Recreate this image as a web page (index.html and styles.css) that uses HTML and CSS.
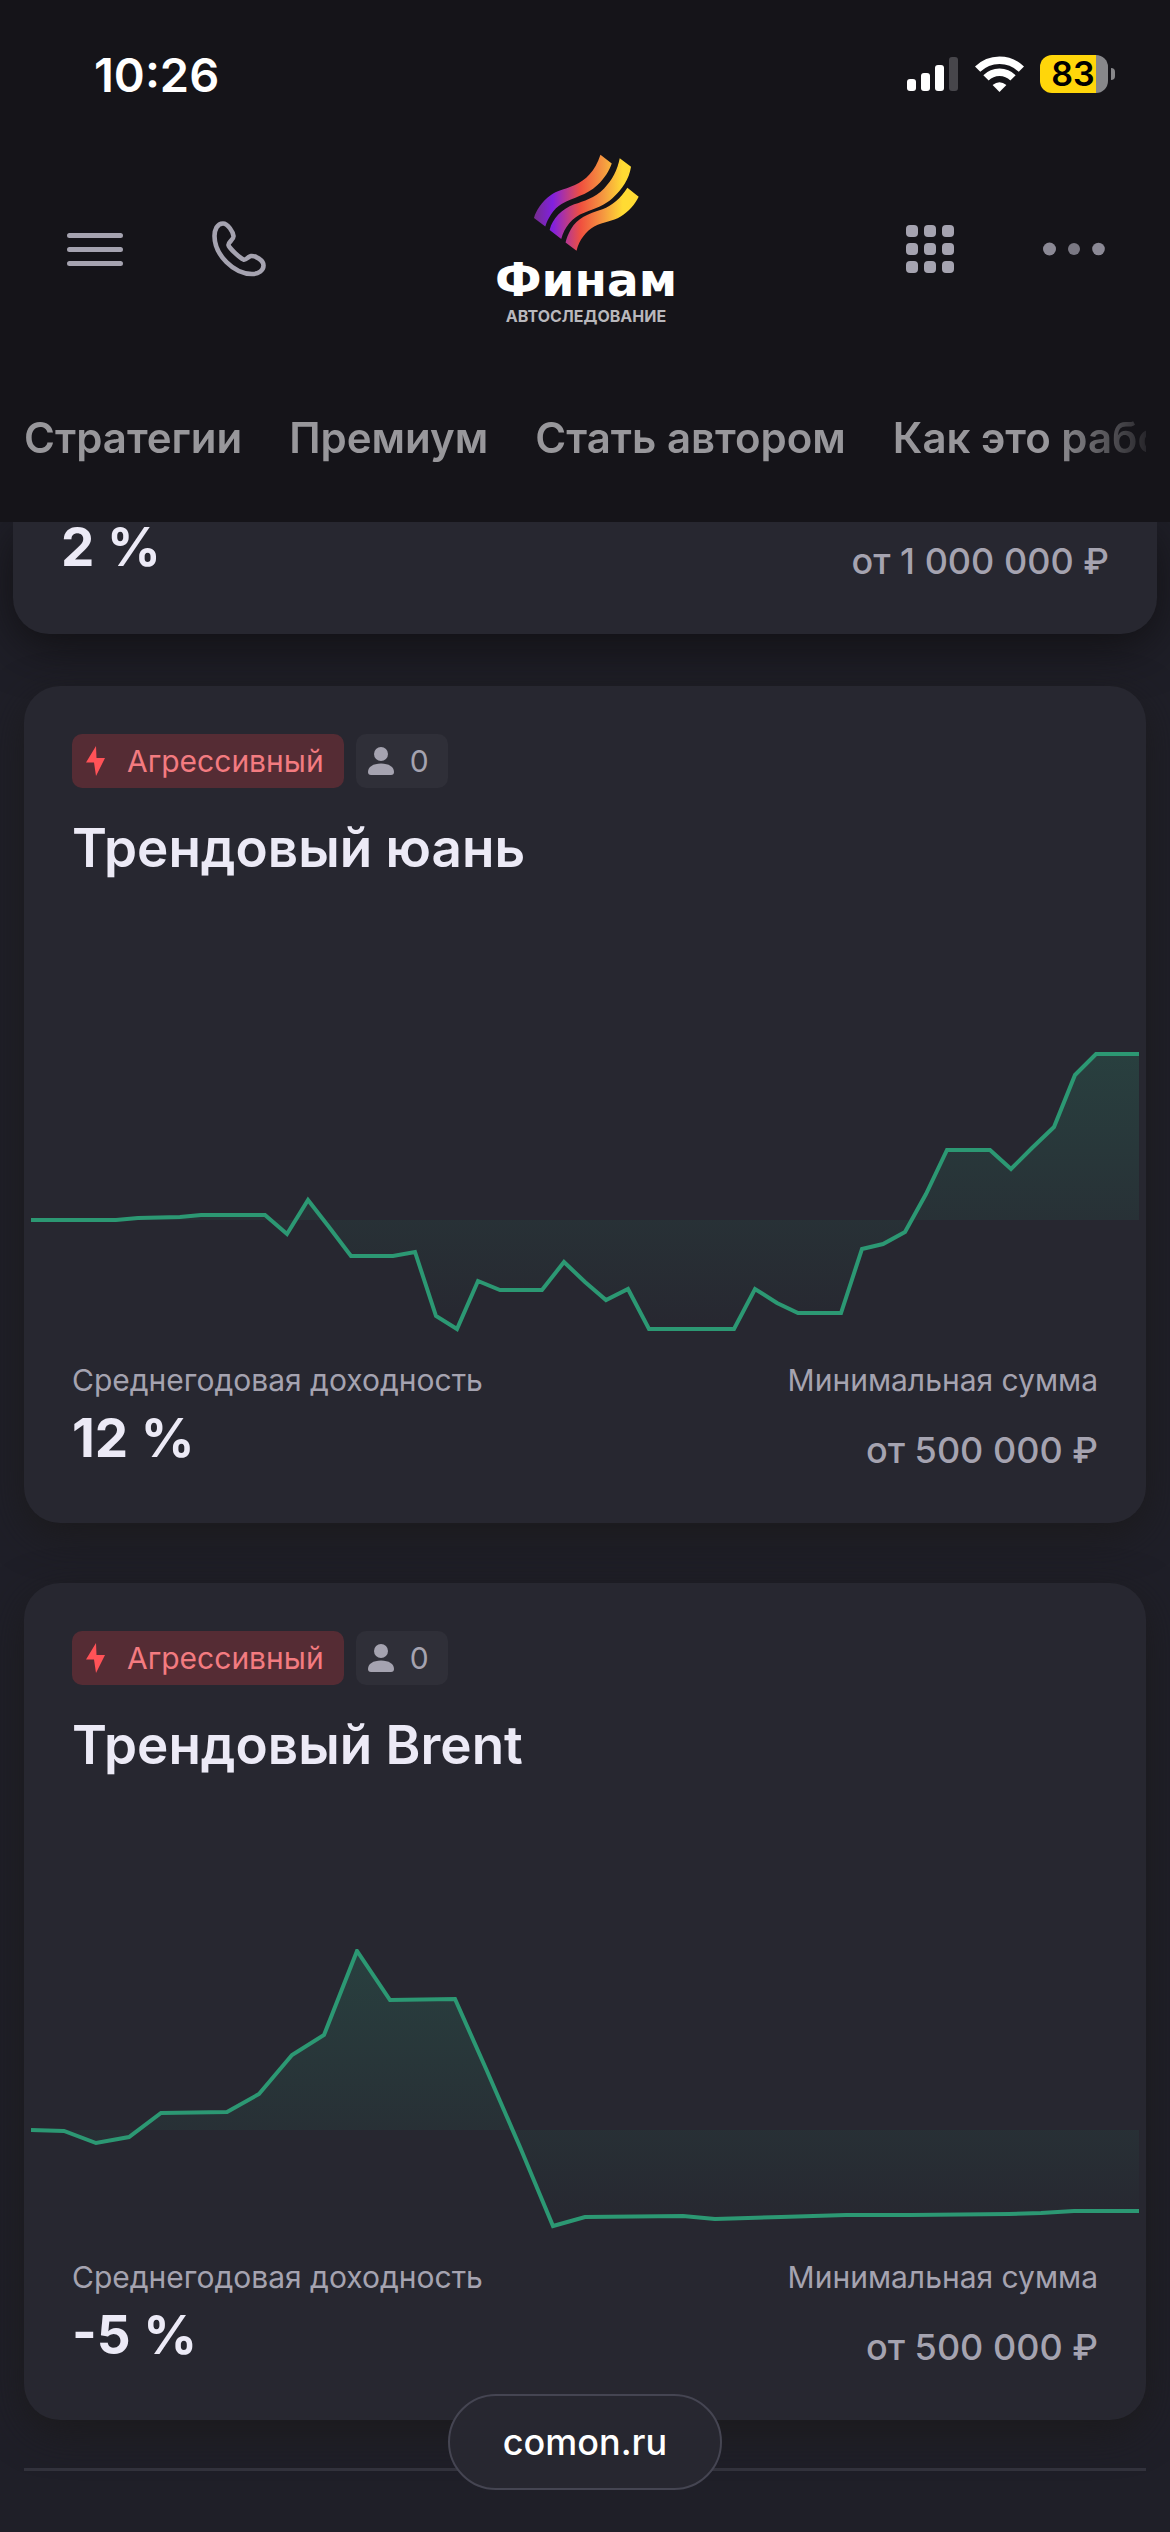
FILE: index.html
```html
<!DOCTYPE html>
<html lang="ru">
  <head>
    <meta charset="UTF-8" />
    <meta name="viewport" content="width=device-width, initial-scale=1.0" />
    <title>Финам Автоследование</title>
    <link rel="stylesheet" href="styles.css">
  </head>
  <body>
    <header class="header">
      <div class="status-bar">
        <span class="time">10:26</span>
        <div class="status-icons">
          <svg width="52" height="36" viewBox="0 0 52 36" fill="#fff">
            <rect x="0" y="23" width="9" height="12" rx="3" />
            <rect x="14" y="17" width="9" height="18" rx="3" />
            <rect x="28" y="9" width="9" height="26" rx="3" />
            <rect x="42" y="1" width="9" height="34" rx="3" fill="#47464b" />
          </svg>
          <svg width="49" height="36" viewBox="0 0 49 36" fill="none" stroke="#fff" stroke-width="7.5">
            <path d="M2.6 13.2 A31 31 0 0 1 46.4 13.2" />
            <path d="M11 21.8 A19 19 0 0 1 38 21.8" />
            <path d="M24.500 36 L17.600 29 Q24.500 23.500 31.400 29 Z" fill="#fff" stroke="none" />
          </svg>
          <div class="battery"><span class="battery-level">83</span></div>
        </div>
      </div>

      <div class="top-row">
        <div class="top-group">
          <button class="icon-btn" aria-label="Меню">
            <svg width="56" height="35" viewBox="0 0 56 35" stroke="#a5a3b0" stroke-width="5" stroke-linecap="round">
              <path d="M2.500 3.500H53.500M2.500 17.500H53.500M2.500 31.500H53.500" />
            </svg>
          </button>
          <button class="icon-btn" aria-label="Позвонить">
            <svg width="54" height="56" viewBox="0 0 54 56" fill="none" stroke="#a5a3b0" stroke-width="4.600" stroke-linejoin="round">
              <path d="M11 2.500C5 2.500 2.500 9 2.500 15C2.500 34 22 53 40 53C47 53 51.500 49 51.500 44.500C51.500 39 43 34.500 39 35C36 35.500 34 39.500 31.500 38.500C28 37 17 27 16.500 24C16 21 22 18.500 21.500 15C21 11 16 2.500 11 2.500Z" />
            </svg>
          </button>
        </div>

        <a class="logo" href="/">
          <svg width="107" height="98" viewBox="186 42 322 294">
            <defs>
              <linearGradient id="flame" gradientUnits="userSpaceOnUse" x1="189" y1="0" x2="470" y2="0">
                <stop offset="0" stop-color="#752d8c" />
                <stop offset="0.200" stop-color="#8120e0" />
                <stop offset="0.500" stop-color="#f0503f" />
                <stop offset="0.750" stop-color="#f59b40" />
                <stop offset="0.950" stop-color="#ffdb33" />
              </linearGradient>
            </defs>
            <g fill="url(#flame)">
              <path d="M389 44C372 95 345 120 312 135C275 151 258 152 240 165C212 185 195 212 189 234L223 260C230 236 248 206 272 192C310 170 345 168 380 135C402 113 415 93 423 70Z" />
              <path d="M447 54C440 90 425 118 400 145C370 175 340 182 310 193C272 208 245 235 236 270L271 297C280 262 305 230 340 218C375 206 402 196 425 175C455 147 475 118 481 80Z" />
              <path d="M470 143C450 175 425 196 395 208C350 222 320 235 300 268C292 282 287 295 284 308L317 333C325 300 345 275 370 260C400 245 425 245 450 230C475 213 493 193 504 170Z" />
            </g>
          </svg>
          <span class="logo-name">Финам</span>
          <span class="logo-sub">АВТОСЛЕДОВАНИЕ</span>
        </a>

        <div class="top-group top-group-right">
          <button class="icon-btn" aria-label="Сервисы">
            <svg width="48" height="48" viewBox="0 0 48 48" fill="#a5a3b0">
              <rect x="0" y="0" width="12" height="12" rx="4" />
              <rect x="18" y="0" width="12" height="12" rx="4" />
              <rect x="36" y="0" width="12" height="12" rx="4" />
              <rect x="0" y="18" width="12" height="12" rx="4" />
              <rect x="18" y="18" width="12" height="12" rx="4" />
              <rect x="36" y="18" width="12" height="12" rx="4" />
              <rect x="0" y="36" width="12" height="12" rx="4" />
              <rect x="18" y="36" width="12" height="12" rx="4" />
              <rect x="36" y="36" width="12" height="12" rx="4" />
            </svg>
          </button>
          <button class="icon-btn" aria-label="Ещё">
            <svg width="62" height="14" viewBox="0 0 62 14" fill="#8b8995">
              <circle cx="6.500" cy="7" r="6.500" />
              <circle cx="31" cy="7" r="6" fill="#7a7883" />
              <circle cx="55.500" cy="7" r="6.300" />
            </svg>
          </button>
        </div>
      </div>

      <nav class="tabs">
        <a href="/strategies">Стратегии</a>
        <a href="/premium">Премиум</a>
        <a href="/author">Стать автором</a>
        <a href="/how-it-works">Как это работает</a>
      </nav>
    </header>

    <main class="strategies">
      <article class="card card-active">
        <div class="metrics">
          <div class="metric"><strong class="income">2 %</strong></div>
          <div class="metric metric-right"><span class="min-sum">от 1 000 000 ₽</span></div>
        </div>
      </article>

      <article class="card">
        <div class="tags">
          <span class="tag tag-risk">
            <svg width="19" height="30" viewBox="0 0 19 30" fill="#ff5257"><path d="M10 0L0 16.500H8L10 30L19 12H10.500Z" /></svg>
            Агрессивный
          </span>
          <span class="tag tag-users">
            <svg width="26" height="28" viewBox="0 0 26 28" fill="#a5a3b0"><circle cx="13" cy="7" r="7" /><path d="M0 25C0 20 5 16.500 13 16.500S26 20 26 25Q26 28 23 28H3Q0 28 0 25Z" /></svg>
            0
          </span>
        </div>
        <h2 class="title">Трендовый юань</h2>
        <svg class="chart" viewBox="0 0 1108 280" preserveAspectRatio="none">
          <defs>
            <linearGradient id="area" gradientUnits="userSpaceOnUse" x1="0" y1="0" x2="0" y2="280">
              <stop offset="0" stop-color="#2fa37c" stop-opacity="0.200" />
              <stop offset="1" stop-color="#2fa37c" stop-opacity="0" />
            </linearGradient>
          </defs>
          <path class="area" d="M0 168L85 168L107 166L149 165L170 163L234 163L256 182L277 148L298 175L320 204L362 204L384 200L405 264L426 277L447 229L469 238L511 238L533 210L554 230L575 248L597 237L618 277L703 277L724 237L746 251L767 261L810 261L831 197L852 192L874 180L895 142L916 98L959 98L980 117L1001 96L1023 75L1044 23L1065 2L1108 2V168Z" />
          <path class="line" d="M0 168L85 168L107 166L149 165L170 163L234 163L256 182L277 148L298 175L320 204L362 204L384 200L405 264L426 277L447 229L469 238L511 238L533 210L554 230L575 248L597 237L618 277L703 277L724 237L746 251L767 261L810 261L831 197L852 192L874 180L895 142L916 98L959 98L980 117L1001 96L1023 75L1044 23L1065 2L1108 2" />
        </svg>
        <div class="metrics">
          <div class="metric">
            <span class="label">Среднегодовая доходность</span>
            <strong class="income">12 %</strong>
          </div>
          <div class="metric metric-right">
            <span class="label">Минимальная сумма</span>
            <span class="min-sum">от 500 000 ₽</span>
          </div>
        </div>
      </article>

      <article class="card">
        <div class="tags">
          <span class="tag tag-risk">
            <svg width="19" height="30" viewBox="0 0 19 30" fill="#ff5257"><path d="M10 0L0 16.500H8L10 30L19 12H10.500Z" /></svg>
            Агрессивный
          </span>
          <span class="tag tag-users">
            <svg width="26" height="28" viewBox="0 0 26 28" fill="#a5a3b0"><circle cx="13" cy="7" r="7" /><path d="M0 25C0 20 5 16.500 13 16.500S26 20 26 25Q26 28 23 28H3Q0 28 0 25Z" /></svg>
            0
          </span>
        </div>
        <h2 class="title">Трендовый Brent</h2>
        <svg class="chart" viewBox="0 0 1108 280" preserveAspectRatio="none">
          <path class="area" d="M0 181L33 182L65 194L98 188L130 164L196 163L228 145L261 106L293 86L326 2L359 51L424 50L456 122L489 198L522 277L554 268L652 267L684 270L717 269L750 268L815 266L880 266L978 265L1010 264L1043 262L1108 262V181Z" />
          <path class="line" d="M0 181L33 182L65 194L98 188L130 164L196 163L228 145L261 106L293 86L326 2L359 51L424 50L456 122L489 198L522 277L554 268L652 267L684 270L717 269L750 268L815 266L880 266L978 265L1010 264L1043 262L1108 262" />
        </svg>
        <div class="metrics">
          <div class="metric">
            <span class="label">Среднегодовая доходность</span>
            <strong class="income">-5 %</strong>
          </div>
          <div class="metric metric-right">
            <span class="label">Минимальная сумма</span>
            <span class="min-sum">от 500 000 ₽</span>
          </div>
        </div>
      </article>
      <hr class="divider" />
    </main>

    <button class="address">comon.ru</button>
  </body>
</html>
```
FILE: styles.css
```css
* {
  box-sizing: border-box;
}

body {
  margin: 0;
  min-height: 100vh;
  background-color: #1f1f28;
  color: #eceaf6;
  font-family: Inter, 'Liberation Sans', sans-serif;
  overflow-x: hidden;
}

button {
  border: none;
  padding: 0;
  background: none;
  font-family: inherit;
}

a {
  color: inherit;
  text-decoration: none;
}

svg {
  display: block;
}

/* header */
.header {
  position: relative;
  z-index: 1;
  background-color: #151419;
}

.status-bar {
  display: flex;
  justify-content: space-between;
  align-items: center;
  height: 140px;
  padding: 8px 55px 0 94px;
}

.time {
  color: #fff;
  font-size: 47px;
  font-weight: 600;
}

.status-icons {
  display: flex;
  align-items: center;
  gap: 16px;
}

.battery {
  display: flex;
  align-items: center;
  gap: 3px;
}

.battery::after {
  content: '';
  width: 4px;
  height: 12px;
  border-radius: 0 4px 4px 0;
  background-color: #87878a;
}

.battery-level {
  width: 68px;
  height: 38px;
  padding-right: 2px;
  border-radius: 12px;
  background: linear-gradient(90deg, #ffd60a 82%, #87878a 82%);
  color: #000;
  font-size: 34px;
  font-weight: 600;
  line-height: 38px;
  text-align: center;
}

.top-row {
  display: grid;
  grid-template-columns: 1fr auto 1fr;
  align-items: center;
  height: 218px;
  padding: 0 65px 0 67px;
}

.top-group {
  display: flex;
  align-items: center;
  gap: 89px;
}

.top-group-right {
  justify-content: flex-end;
}

.logo {
  display: flex;
  flex-direction: column;
  align-items: center;
  padding-bottom: 16px;
}

.logo-name {
  margin-top: 4px;
  color: #fff;
  font-family: 'DejaVu Sans', sans-serif;
  font-size: 47px;
  font-weight: 700;
  line-height: 48px;
}

.logo-sub {
  color: #b9b8bc;
  font-size: 16px;
  font-weight: 700;
  line-height: 24px;
}

.tabs {
  display: flex;
  gap: 47px;
  margin: 0 24px;
  padding: 50px 0 54px;
  overflow: hidden;
  color: #98979b;
  font-size: 42px;
  font-weight: 600;
  line-height: 60px;
  white-space: nowrap;
  -webkit-mask-image: linear-gradient(90deg, #000 calc(100% - 96px), rgba(0, 0, 0, 0.15));
  mask-image: linear-gradient(90deg, #000 calc(100% - 96px), rgba(0, 0, 0, 0.15));
}

/* cards */
.strategies {
  display: flex;
  flex-direction: column;
  padding: 0 24px;
}

.card {
  margin-bottom: 60px;
  padding: 48px 0;
  border-radius: 36px;
  background-color: #272730;
  box-shadow: 0 12px 40px rgba(27, 26, 27, 0.9);
}

/* the highlighted card is a bit wider and slides under the header */
.card-active {
  margin: 0 -11px 52px;
  padding-top: 0;
  border-radius: 0 0 36px 36px;
  box-shadow: 0 12px 48px rgba(15, 14, 17, 0.9);
}

.tags {
  display: flex;
  gap: 12px;
  padding: 0 48px;
}

.tag {
  display: flex;
  align-items: center;
  height: 54px;
  border-radius: 10px;
  font-size: 30px;
}

.tag-risk {
  gap: 22px;
  padding: 0 20px 0 14px;
  background-color: #552c34;
  color: #f37b80;
}

.tag-users {
  gap: 16px;
  padding: 0 19px 0 12px;
  background-color: #2f2f38;
  color: #a5a3b0;
}

.title {
  margin: 28px 0 172px;
  padding: 0 48px;
  font-size: 53px;
  font-weight: 600;
  line-height: 64px;
}

.chart {
  width: calc(100% - 14px);
  height: 280px;
  margin: 0 7px 28px;
}

.area {
  fill: url(#area);
}

.line {
  fill: none;
  stroke: #2c9873;
  stroke-width: 4;
}

.metrics {
  display: flex;
  justify-content: space-between;
  padding: 0 48px;
}

.metric {
  display: flex;
  flex-direction: column;
}

.metric-right {
  align-items: flex-end;
}

.label {
  color: #a5a3b0;
  font-size: 30px;
  line-height: 40px;
}

.income {
  margin-top: 5px;
  font-size: 53px;
  font-weight: 700;
  line-height: 66px;
}

.min-sum {
  margin-top: 25px;
  color: #a5a3b0;
  font-size: 36px;
  font-weight: 500;
  line-height: 50px;
}

.card-active .income {
  margin-top: -8px;
}

.card-active .min-sum {
  margin-top: 14px;
}

.divider {
  width: 100%;
  height: 3px;
  margin: -12px 0 0;
  border: none;
  background-color: #32323c;
}

/* browser address pill */
.address {
  position: fixed;
  bottom: 42px;
  left: 50%;
  z-index: 2;
  width: 274px;
  height: 96px;
  transform: translateX(-50%);
  border: 2px solid #454552;
  border-radius: 48px;
  background-color: #272730;
  color: #fff;
  font-size: 36px;
  font-weight: 500;
}
```
